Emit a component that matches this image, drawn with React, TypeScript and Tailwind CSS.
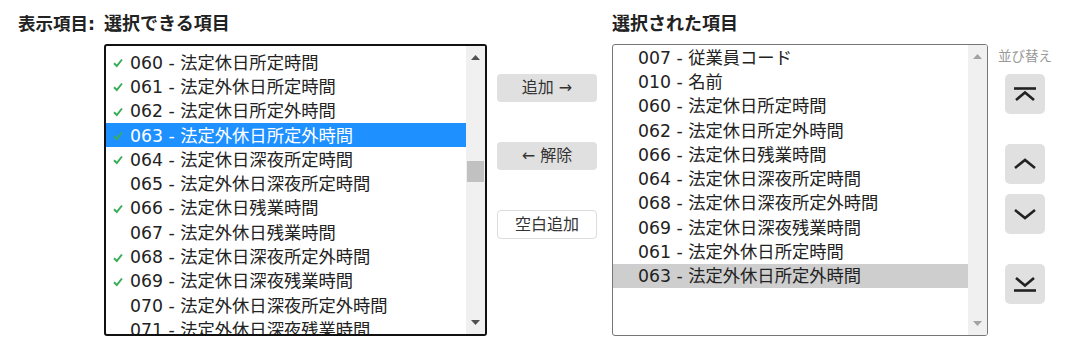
type Item = { code: string; name: string; checked?: boolean };

const available: Item[] = [
  { code: '060', name: '法定休日所定時間', checked: true },
  { code: '061', name: '法定外休日所定時間', checked: true },
  { code: '062', name: '法定休日所定外時間', checked: true },
  { code: '063', name: '法定外休日所定外時間', checked: true },
  { code: '064', name: '法定休日深夜所定時間', checked: true },
  { code: '065', name: '法定外休日深夜所定時間' },
  { code: '066', name: '法定休日残業時間', checked: true },
  { code: '067', name: '法定外休日残業時間' },
  { code: '068', name: '法定休日深夜所定外時間', checked: true },
  { code: '069', name: '法定休日深夜残業時間', checked: true },
  { code: '070', name: '法定外休日深夜所定外時間' },
  { code: '071', name: '法定外休日深夜残業時間' },
];

const selected: Item[] = [
  { code: '007', name: '従業員コード' },
  { code: '010', name: '名前' },
  { code: '060', name: '法定休日所定時間' },
  { code: '062', name: '法定休日所定外時間' },
  { code: '066', name: '法定休日残業時間' },
  { code: '064', name: '法定休日深夜所定時間' },
  { code: '068', name: '法定休日深夜所定外時間' },
  { code: '069', name: '法定休日深夜残業時間' },
  { code: '061', name: '法定外休日所定時間' },
  { code: '063', name: '法定外休日所定外時間' },
];

const font = {
  fontFamily: '"DejaVu Sans", "Noto Sans CJK JP", sans-serif',
};

function Check() {
  return (
    <svg className="h-[10px] w-[10px]" viewBox="0 0 10 10">
      <path
        d="M1 5.2 L3.8 8 L9 1.5"
        fill="none"
        stroke="#3aad5a"
        strokeWidth="2"
      />
    </svg>
  );
}

function Scrollbar({ active, thumb }: { active: boolean; thumb: boolean }) {
  const arrow = active ? 'fill-[#505050]' : 'fill-[#a3a3a3]';
  return (
    <div className="flex w-[19px] shrink-0 flex-col items-center bg-[#f0f0f0]">
      <svg className={`mt-[9px] h-[5px] w-[9px] ${arrow}`} viewBox="0 0 9 5">
        <path d="M0 5 L4.5 0 L9 5 Z" />
      </svg>
      {thumb && <div className="mt-[101px] h-[21px] w-[17px] bg-[#c1c1c1]" />}
      <div className="flex-1" />
      <svg className={`mb-[9px] h-[5px] w-[9px] ${arrow}`} viewBox="0 0 9 5">
        <path d="M0 0 L4.5 5 L9 0 Z" />
      </svg>
    </div>
  );
}

type SortKind = 'top' | 'up' | 'down' | 'bottom';

function SortIcon({ kind }: { kind: SortKind }) {
  return (
    <svg
      className="h-[24px] w-[24px]"
      fill="none"
      stroke="#222"
      strokeWidth="2.6"
      viewBox="0 0 24 24"
    >
      {kind === 'top' && (
        <>
          <path d="M1 6.5 H23" />
          <path d="M3 18 L12 10.5 L21 18" />
        </>
      )}
      {kind === 'up' && <path d="M2 16 L12 8 L22 16" />}
      {kind === 'down' && <path d="M2 8 L12 16 L22 8" />}
      {kind === 'bottom' && (
        <>
          <path d="M3 6 L12 13.5 L21 6" />
          <path d="M1 18.5 H23" />
        </>
      )}
    </svg>
  );
}

function SortButton({ kind, className }: { kind: SortKind; className: string }) {
  return (
    <button
      className={`flex h-[40px] w-[40px] items-center justify-center rounded-[5px] bg-[#e0e0e0] ${className}`}
      type="button"
    >
      <SortIcon kind={kind} />
    </button>
  );
}

export default function App() {
  return (
    <div
      className="flex h-[356px] w-[1077px] items-start bg-white pl-[18px] pt-[10px] text-[#222]"
      style={font}
    >
      <div className="h-[28px] w-[86px] text-[17.5px] font-bold leading-[28px]">表示項目:</div>

      <div className="flex w-[383px] flex-col">
        <h2 className="h-[28px] text-[18px] font-bold leading-[28px]">選択できる項目</h2>
        <div className="mt-[6px] flex h-[292px] overflow-hidden rounded-[3px] border-2 border-[#111]">
          <ul className="min-w-0 flex-1 pt-[4px]">
            {available.map((item) => {
              const active = item.code === '063';
              return (
                <li
                  className={`flex h-[24.3px] items-center whitespace-nowrap text-[17.3px] ${
                    active ? 'bg-[#1e90ff] text-white' : ''
                  }`}
                  key={item.code}
                >
                  <span className="flex w-[24px] justify-center pt-[2px]">
                    {item.checked && <Check />}
                  </span>
                  <span className="pt-[3px]">
                    {item.code} - {item.name}
                  </span>
                </li>
              );
            })}
          </ul>
          <Scrollbar active thumb />
        </div>
      </div>

      <div className="ml-[10px] flex w-[100px] flex-col pt-[64px] text-[16px] text-[#333]">
        <button className="h-[28px] rounded-[4px] bg-[#e0e0e0]" type="button">
          追加 →
        </button>
        <button className="mt-[40px] h-[28px] rounded-[4px] bg-[#e0e0e0]" type="button">
          ← 解除
        </button>
        <button
          className="mt-[40px] h-[29px] rounded-[4px] border border-[#dcdcdc] bg-white"
          type="button"
        >
          空白追加
        </button>
      </div>

      <div className="ml-[15px] flex w-[376px] flex-col">
        <h2 className="h-[28px] text-[18px] font-bold leading-[28px]">選択された項目</h2>
        <div className="mt-[6px] flex h-[292px] overflow-hidden rounded-[3px] border border-[#767676]">
          <ul className="min-w-0 flex-1">
            {selected.map((item) => (
              <li
                className={`flex h-[24.3px] items-center whitespace-nowrap pl-[25px] text-[17.3px] ${
                  item.code === '063' ? 'bg-[#cecece]' : ''
                }`}
                key={item.code}
              >
                <span className="pt-[3px]">
                  {item.code} - {item.name}
                </span>
              </li>
            ))}
          </ul>
          <Scrollbar active={false} thumb={false} />
        </div>
      </div>

      <div className="ml-[10px] flex w-[54px] flex-col items-center pt-[34px]">
        <div className="h-[24px] text-[13.5px] leading-[24px] text-[#999]">並び替え</div>
        <SortButton className="mt-[6px]" kind="top" />
        <SortButton className="mt-[30px]" kind="up" />
        <SortButton className="mt-[10px]" kind="down" />
        <SortButton className="mt-[30px]" kind="bottom" />
      </div>
    </div>
  );
}
